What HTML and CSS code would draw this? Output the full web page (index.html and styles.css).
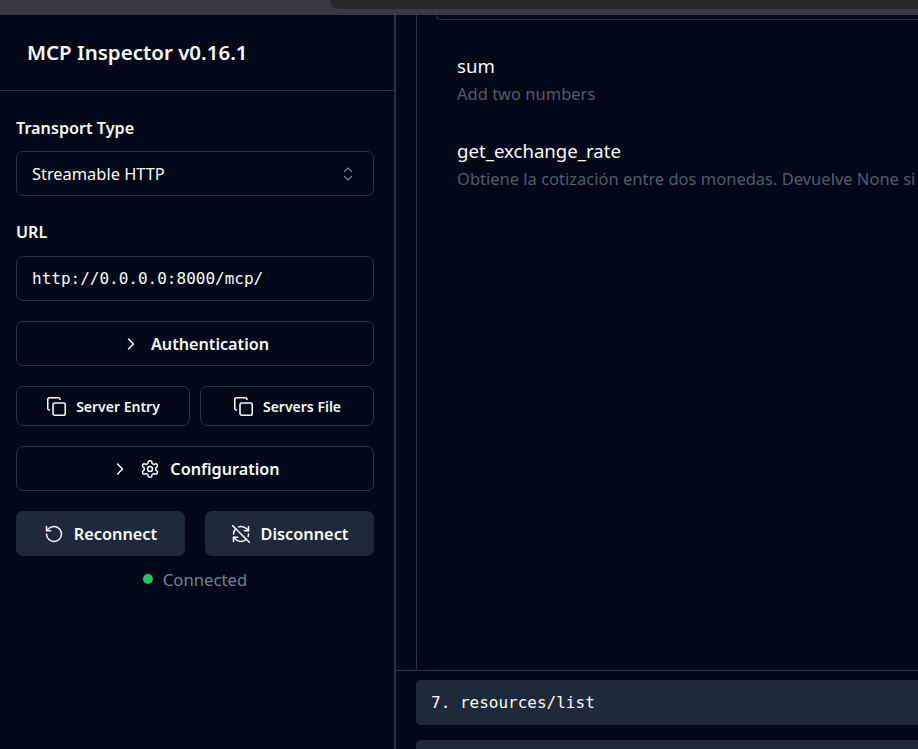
FILE: index.html
```html
<!DOCTYPE html>
<html lang="en">
<head>
<meta charset="utf-8">
<title>MCP Inspector</title>
<link rel="stylesheet" href="styles.css">
</head>
<body>
<div class="chrome"><div class="chrome-tab"></div></div>
<div class="app">
  <aside class="sidebar">
    <header class="brand"><h1>MCP Inspector v0.16.1</h1></header>
    <div class="form">
      <label class="label first">Transport Type</label>
      <div class="field select"><span>Streamable HTTP</span>
        <svg class="updown" viewBox="0 0 24 24"><path d="m7 15 5 5 5-5"/><path d="m7 9 5-5 5 5"/></svg>
      </div>
      <label class="label url">URL</label>
      <div class="field mono">http://0.0.0.0:8000/mcp/</div>
      <button class="btn tall auth">
        <svg class="ic" viewBox="0 0 24 24"><path d="m9 18 6-6-6-6"/></svg><span>Authentication</span>
      </button>
      <div class="row">
        <button class="btn small">
          <svg class="ic copy" viewBox="0 0 24 24"><rect width="14" height="14" x="8" y="8" rx="2" ry="2"/><path d="M4 16c-1.100 0-2-.9-2-2V4c0-1.100.9-2 2-2h10c1.100 0 2 .9 2 2"/></svg><span>Server Entry</span>
        </button>
        <button class="btn small">
          <svg class="ic copy" viewBox="0 0 24 24"><rect width="14" height="14" x="8" y="8" rx="2" ry="2"/><path d="M4 16c-1.100 0-2-.9-2-2V4c0-1.100.9-2 2-2h10c1.100 0 2 .9 2 2"/></svg><span>Servers File</span>
        </button>
      </div>
      <button class="btn tall config">
        <svg class="ic" viewBox="0 0 24 24"><path d="m9 18 6-6-6-6"/></svg>
        <svg class="ic" viewBox="0 0 24 24"><path d="M12.220 2h-.44a2 2 0 0 0-2 2v.18a2 2 0 0 1-1 1.730l-.43.25a2 2 0 0 1-2 0l-.15-.08a2 2 0 0 0-2.730.73l-.22.38a2 2 0 0 0 .73 2.730l.15.1a2 2 0 0 1 1 1.720v.51a2 2 0 0 1-1 1.740l-.15.09a2 2 0 0 0-.73 2.730l.22.38a2 2 0 0 0 2.730.73l.15-.08a2 2 0 0 1 2 0l.43.25a2 2 0 0 1 1 1.730V20a2 2 0 0 0 2 2h.44a2 2 0 0 0 2-2v-.18a2 2 0 0 1 1-1.730l.43-.25a2 2 0 0 1 2 0l.15.08a2 2 0 0 0 2.730-.73l.22-.39a2 2 0 0 0-.73-2.730l-.15-.08a2 2 0 0 1-1-1.740v-.5a2 2 0 0 1 1-1.740l.15-.09a2 2 0 0 0 .73-2.730l-.22-.38a2 2 0 0 0-2.730-.73l-.15.08a2 2 0 0 1-2 0l-.43-.25a2 2 0 0 1-1-1.730V4a2 2 0 0 0-2-2z"/><circle cx="12" cy="12" r="3"/></svg>
        <span>Configuration</span>
      </button>
      <div class="row wide">
        <button class="btn fill">
          <svg class="ic" viewBox="0 0 24 24"><path d="M3 12a9 9 0 1 0 9-9 9.750 9.750 0 0 0-6.740 2.740L3 8"/><path d="M3 3v5h5"/></svg><span>Reconnect</span>
        </button>
        <button class="btn fill">
          <svg class="ic" viewBox="0 0 24 24"><path d="M21 8L18.740 5.740A9.750 9.750 0 0 0 12 3C11 3 10.030 3.160 9.120 3.450"/><path d="M8 16H3v5"/><path d="M3 12C3 9.510 4 7.260 5.640 5.640"/><path d="m3 16 2.260 2.260A9.750 9.750 0 0 0 12 21c2.490 0 4.740-1 6.360-2.640"/><path d="M21 12c0 1-.16 1.970-.45 2.880"/><path d="M21 3v5h-5"/><path d="M22 22 2 2"/></svg><span>Disconnect</span>
        </button>
      </div>
      <div class="status"><i class="dot"></i><span>Connected</span></div>
    </div>
  </aside>
  <main class="main">
    <div class="upper">
      <div class="panel">
        <div class="card-end"></div>
        <div class="tool first-tool">
          <div class="tool-name">sum</div>
          <div class="tool-desc">Add two numbers</div>
        </div>
        <div class="tool">
          <div class="tool-name">get_exchange_rate</div>
          <div class="tool-desc">Obtiene la cotización entre dos monedas. Devuelve None si</div>
        </div>
      </div>
    </div>
    <div class="history">
      <div class="entry">7. resources/list</div>
      <div class="entry"></div>
    </div>
  </main>
</div>
</body>
</html>
```

FILE: styles.css
```css
* { box-sizing: border-box; }
html, body { margin: 0; height: 749px; overflow: hidden; }
body {
  background: #020817;
  color: #f8fafc;
  font-family: "Noto Sans", "Open Sans", sans-serif;
  display: flex;
  flex-direction: column;
}
.chrome { height: 15px; flex: none; background: #3b393d; padding-left: 330px; }
.chrome-tab { height: 9px; background: #29282b; border-bottom-left-radius: 9px; }
.app { flex: 1; display: flex; min-height: 0; }
.sidebar { width: 396px; flex: none; border-right: 2px solid #2a3344; }
.brand { height: 76px; border-bottom: 1px solid #2a3344; padding: 0 0 1px 27px; display: flex; align-items: center; }
.brand h1 { margin: 0; font-size: 20.500px; font-weight: 600; line-height: 28px; }
.form { padding: 0 20px 0 16px; display: flex; flex-direction: column; }
.label { font-size: 16.200px; font-weight: 600; line-height: 20px; display: block; }
.label.first { margin-top: 27px; margin-bottom: 13px; }
.label.url { margin-top: 26px; margin-bottom: 14px; }
.field { height: 45px; border: 1px solid #2a3344; border-radius: 7px; padding: 0 15px; display: flex; align-items: center; font-size: 16.400px; }
.select { justify-content: space-between; }
.updown { width: 18px; height: 18px; margin-right: 1px; fill: none; stroke: #7d8591; stroke-width: 1.500; stroke-linecap: round; stroke-linejoin: round; }
.mono, .entry { font-family: "DejaVu Sans Mono", "Liberation Mono", monospace; font-size: 16px; }
.btn {
  font-family: inherit; color: #f8fafc; background: transparent;
  border: 1px solid #2a3344; border-radius: 7px;
  display: flex; align-items: center; justify-content: center;
  font-weight: 600; padding: 1px 0 0; margin: 0;
}
.ic { width: 20px; height: 20px; fill: none; stroke: currentColor; stroke-width: 1.800; stroke-linecap: round; stroke-linejoin: round; flex: none; }
.copy { width: 21px; height: 21px; }
.tall { height: 45px; font-size: 16.200px; }
.auth { margin-top: 20px; gap: 10px; }
.config { margin-top: 20px; gap: 10px; }
.row { display: flex; gap: 10px; margin-top: 20px; }
.row.wide { gap: 20px; }
.row .btn { flex: 1; }
.small { height: 40px; font-size: 14px; gap: 9px; }
.fill { height: 45px; background: #1e293b; border: 0; font-size: 16.300px; gap: 10px; }
.status { display: flex; align-items: center; justify-content: center; gap: 10px; margin-top: 12px; height: 22px; font-size: 16.700px; color: #708096; }
.dot { width: 10px; height: 10px; border-radius: 50%; background: #22c55e; }
.main { flex: 1; min-width: 0; display: flex; flex-direction: column; }
.upper { height: 656px; flex: none; padding-left: 20px; border-bottom: 1px solid #2a3344; overflow: hidden; }
.panel { height: 100%; border-left: 1px solid #2a3344; padding-left: 19px; white-space: nowrap; }
.card-end { height: 5px; border: 1px solid #2a3344; border-top: 0; border-right: 0; border-bottom-left-radius: 7px; }
.tool { padding-left: 21px; }
.first-tool { margin-top: 33px; }
.tool + .tool { margin-top: 31px; }
.tool-name { font-size: 18.600px; line-height: 26px; }
.tool-desc { font-size: 16.500px; line-height: 26px; margin-top: 2px; color: #535c6b; }
.history { flex: 1; padding: 9px 0 0 20px; display: flex; flex-direction: column; gap: 15px; overflow: hidden; }
.entry { height: 45px; flex: none; background: #1e293b; border-radius: 5px 0 0 5px; padding-left: 15px; display: flex; align-items: center; }
```
